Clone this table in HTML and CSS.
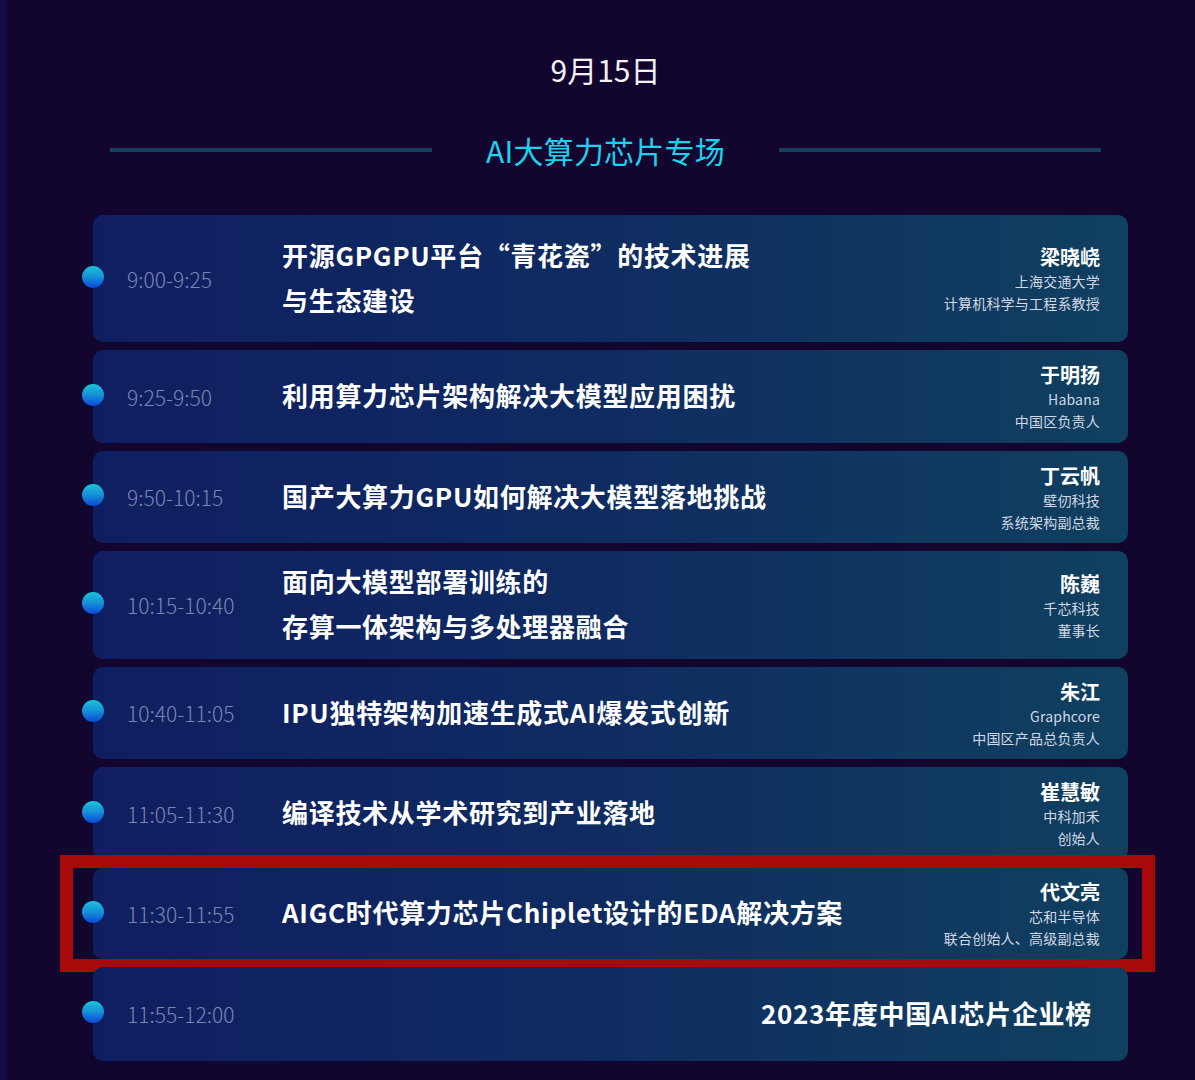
FILE: index.html
```html
<!DOCTYPE html>
<html lang="zh-CN">
<head>
<meta charset="utf-8">
<title>9月15日 AI大算力芯片专场</title>
<link rel="stylesheet" href="styles.css">
</head>
<body>
<div class="page">
  <header class="head">
    <div class="date">9月15日</div>
    <div class="section">
      <span class="rule"></span>
      <h2 class="section-title">AI大算力芯片专场</h2>
      <span class="rule"></span>
    </div>
  </header>

  <ul class="agenda">
    <li class="card card--h127">
      <span class="dot"></span>
      <div class="time">9:00-9:25</div>
      <div class="topic">开源GPGPU平台“青花瓷”的技术进展<br>与生态建设</div>
      <div class="speaker">
        <div class="name">梁晓峣</div>
        <div class="info">上海交通大学</div>
        <div class="info">计算机科学与工程系教授</div>
      </div>
    </li>
    <li class="card card--h93">
      <span class="dot"></span>
      <div class="time">9:25-9:50</div>
      <div class="topic">利用算力芯片架构解决大模型应用困扰</div>
      <div class="speaker">
        <div class="name">于明扬</div>
        <div class="info">Habana</div>
        <div class="info">中国区负责人</div>
      </div>
    </li>
    <li class="card card--h92">
      <span class="dot"></span>
      <div class="time">9:50-10:15</div>
      <div class="topic">国产大算力GPU如何解决大模型落地挑战</div>
      <div class="speaker">
        <div class="name">丁云帆</div>
        <div class="info">壁仞科技</div>
        <div class="info">系统架构副总裁</div>
      </div>
    </li>
    <li class="card card--h108">
      <span class="dot"></span>
      <div class="time">10:15-10:40</div>
      <div class="topic">面向大模型部署训练的<br>存算一体架构与多处理器融合</div>
      <div class="speaker">
        <div class="name">陈巍</div>
        <div class="info">千芯科技</div>
        <div class="info">董事长</div>
      </div>
    </li>
    <li class="card card--h92">
      <span class="dot"></span>
      <div class="time">10:40-11:05</div>
      <div class="topic">IPU独特架构加速生成式AI爆发式创新</div>
      <div class="speaker">
        <div class="name">朱江</div>
        <div class="info">Graphcore</div>
        <div class="info">中国区产品总负责人</div>
      </div>
    </li>
    <li class="card card--h93">
      <span class="dot"></span>
      <div class="time">11:05-11:30</div>
      <div class="topic">编译技术从学术研究到产业落地</div>
      <div class="speaker">
        <div class="name">崔慧敏</div>
        <div class="info">中科加禾</div>
        <div class="info">创始人</div>
      </div>
    </li>
    <li class="card card--h91 card--marked">
      <span class="dot"></span>
      <div class="time">11:30-11:55</div>
      <div class="topic">AIGC时代算力芯片Chiplet设计的EDA解决方案</div>
      <div class="speaker">
        <div class="name">代文亮</div>
        <div class="info">芯和半导体</div>
        <div class="info">联合创始人、高级副总裁</div>
      </div>
      <span class="mark"></span>
    </li>
    <li class="card card--h94">
      <span class="dot"></span>
      <div class="time">11:55-12:00</div>
      <div class="topic topic--right">2023年度中国AI芯片企业榜</div>
    </li>
  </ul>
</div>
</body>
</html>
```

FILE: styles.css
```css
* {
  box-sizing: border-box;
}

html, body {
  margin: 0;
  padding: 0;
  background: #12062e;
}

body {
  font-family: "Noto Sans CJK SC", "Noto Sans", sans-serif;
  color: #ffffff;
}

.page {
  min-height: 1080px;
  border-left: 7px solid #150a48;
  padding-bottom: 20px;
}

.head {
  margin-left: 103px;
  width: 991px;
  padding-top: 48px;
}

.date {
  height: 42px;
  line-height: 42px;
  font-size: 30px;
  text-align: center;
  color: #f2f2f7;
}

.section {
  display: flex;
  align-items: center;
  margin-top: 38px;
  height: 44px;
}

.rule {
  flex: 1;
  height: 4px;
  background: #17405e;
}

.section-title {
  margin: 0 54px;
  font-size: 30px;
  font-weight: 400;
  line-height: 44px;
  letter-spacing: 0.2px;
  color: #19d3ef;
}

.agenda {
  list-style: none;
  margin: 43px 0 0 86px;
  padding: 0;
  width: 1035px;
  display: flex;
  flex-direction: column;
  gap: 8px;
}

.card {
  position: relative;
  display: flex;
  align-items: center;
  padding: 0 28px 4px 34px;
  border-radius: 10px;
  background: linear-gradient(90deg, #0f1e60 0%, #0f2a61 45%, #10405f 100%);
}

.card--h127 { height: 127px; }
.card--h108 { height: 108px; }
.card--h94 { height: 94px; }
.card--h93 { height: 93px; }
.card--h92 { height: 92px; }
.card--h91 { height: 91px; }

.dot {
  position: absolute;
  left: -11px;
  top: 50%;
  width: 22px;
  height: 22px;
  margin-top: -13px;
  border-radius: 50%;
  background: linear-gradient(180deg, #1cc2d8 0%, #1590d8 50%, #0a48d8 100%);
}

.time {
  width: 155px;
  flex: none;
  font-size: 21px;
  font-weight: 300;
  color: #7a86b2;
  margin-top: 4px;
}

.topic {
  flex: 1;
  font-size: 26px;
  font-weight: 700;
  line-height: 45px;
  letter-spacing: 0.7px;
  color: #ffffff;
}

.topic--right {
  text-align: right;
  padding-right: 8px;
}

.speaker {
  flex: none;
  text-align: right;
  margin-top: 5px;
}

.name {
  font-size: 20px;
  font-weight: 700;
  line-height: 26px;
}

.info {
  font-size: 14px;
  line-height: 22px;
  letter-spacing: 0.2px;
  color: #d2d8e6;
}

.mark {
  position: absolute;
  top: -13px;
  left: -33px;
  right: -27px;
  bottom: -13px;
  border: 13px solid #a80a0a;
  pointer-events: none;
}
```
